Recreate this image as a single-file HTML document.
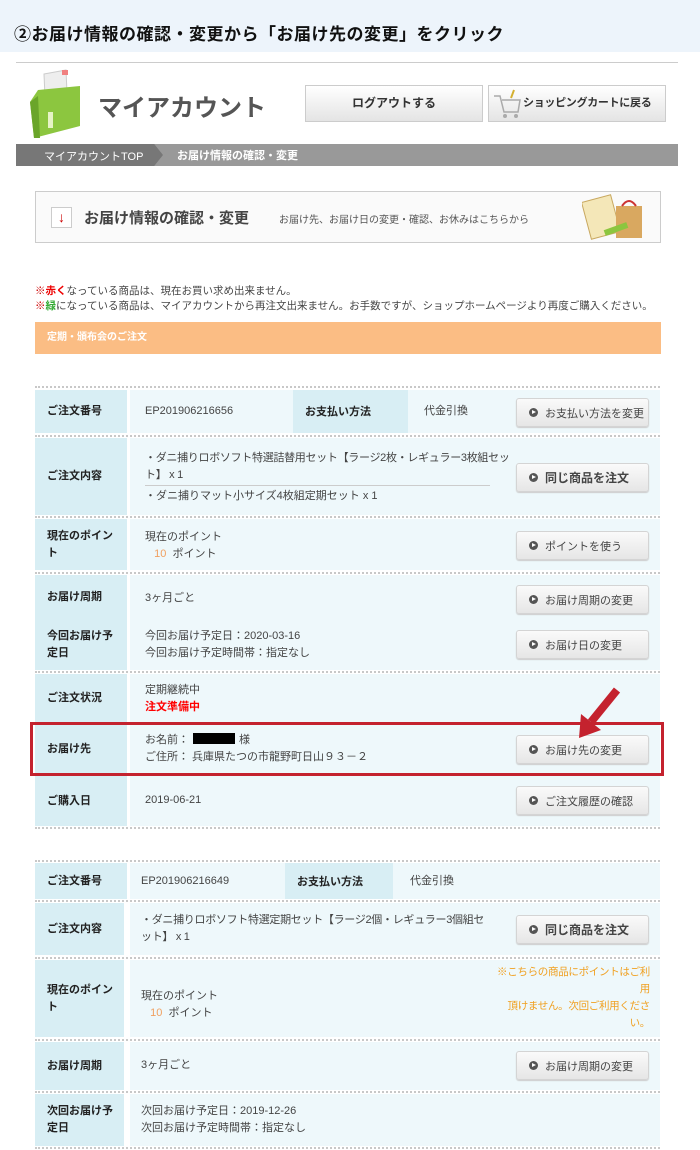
<!DOCTYPE html>
<html><head><meta charset="utf-8"><style>
*{margin:0;padding:0;box-sizing:border-box}
body{width:700px;height:1150px;background:#fff;font-family:"Liberation Sans","Noto Sans CJK JP",sans-serif;color:#333;position:relative;overflow:hidden;font-size:11px}
.a{position:absolute}
.lab{position:absolute;left:35px;width:92px;background:#d8eef4;font-weight:bold;font-size:11px;padding-left:12px;display:flex;align-items:center;line-height:17px;color:#222}
.val{position:absolute;left:130px;width:530px;background:#eef8fb}
.dl{position:absolute;left:35px;width:625px;border-top:2px dotted #c8c8c8}
.btn{position:absolute;left:516px;width:133px;height:29px;border:1px solid #d4d4d4;border-radius:3px;background:linear-gradient(#fafafa,#e6e6e6);font-size:11px;color:#444;display:flex;align-items:center;padding-left:12px;box-shadow:0 1px 1px #ccc;white-space:nowrap}
.btn b{width:9px;height:9px;border-radius:50%;background:#555;margin-right:7px;display:inline-block;position:relative}
.btn b:after{content:"";position:absolute;left:3px;top:2px;border-left:4px solid #fff;border-top:2.5px solid transparent;border-bottom:2.5px solid transparent}
.t{position:absolute;font-size:11px;line-height:17px;color:#444;white-space:nowrap}
</style></head><body>
<div class="a" style="left:0;top:0;width:700px;height:52px;background:#edf4fb"></div>
<div class="a" style="left:14px;top:20px;font-size:17px;font-weight:bold;color:#111;letter-spacing:0.5px">②お届け情報の確認・変更から「お届け先の変更」をクリック</div>
<div class="a" style="left:16px;top:62px;width:662px;border-top:1px solid #ccc"></div>
<svg class="a" style="left:26px;top:68px" width="60" height="72" viewBox="0 0 60 72"><path d="M18 6 L40 2 L42 48 L20 52Z" fill="#eee" stroke="#ccc"/><rect x="36" y="2" width="6" height="5" fill="#f08080"/><path d="M4 34 L12 22 L54 18 L54 58 L8 70Z" fill="#8cc63f"/><path d="M4 34 L12 28 L14 70 L8 70Z" fill="#6aa52a"/><rect x="22" y="44" width="5" height="16" fill="#e6f3c6"/></svg>
<div class="a" style="left:98px;top:88px;font-size:24px;font-weight:bold;color:#555;white-space:nowrap">マイアカウント</div>
<div class="a" style="left:305px;top:85px;width:178px;height:37px;border:1px solid #ccc;background:linear-gradient(#fff,#e4e4e4);font-weight:bold;font-size:12px;color:#333;text-align:center;line-height:35px">ログアウトする</div>
<div class="a" style="left:488px;top:85px;width:178px;height:37px;border:1px solid #ccc;background:linear-gradient(#fff,#e4e4e4);font-weight:bold;font-size:11px;color:#333;line-height:35px;padding-left:34px;white-space:nowrap;letter-spacing:-0.3px">ショッピングカートに戻る</div>
<svg class="a" style="left:492px;top:88px" width="30" height="32"><path d="M2 8h6l4 16h14l2-12H10" fill="none" stroke="#aaa" stroke-width="1.5"/><circle cx="13" cy="28" r="2" fill="#aaa"/><circle cx="24" cy="28" r="2" fill="#aaa"/><path d="M22 2l-3 8" stroke="#d4b030" stroke-width="2"/></svg>
<div class="a" style="left:16px;top:144px;width:662px;height:22px;background:#999"></div>
<div class="a" style="left:16px;top:144px;width:147px;height:22px;background:#777;clip-path:polygon(0 0,94% 0,100% 50%,94% 100%,0 100%)"></div>
<div class="a" style="left:44px;top:148px;color:#fff;font-size:11px">マイアカウントTOP</div>
<div class="a" style="left:177px;top:147px;color:#fff;font-size:11px;font-weight:bold">お届け情報の確認・変更</div>
<div class="a" style="left:35px;top:191px;width:626px;height:52px;border:1px solid #ccc;background:#fafafa"></div>
<div class="a" style="left:51px;top:207px;width:21px;height:21px;border:1px solid #ccc;background:#fff;color:#c00;text-align:center;font-weight:bold;font-size:14px;line-height:19px">↓</div>
<div class="a" style="left:84px;top:207px;font-size:15px;font-weight:bold;color:#444">お届け情報の確認・変更</div>
<div class="a" style="left:279px;top:211px;font-size:10px;color:#555">お届け先、お届け日の変更・確認、お休みはこちらから</div>
<svg class="a" style="left:582px;top:192px" width="66" height="50"><rect x="4" y="6" width="30" height="38" fill="#f4e7b8" stroke="#c8a860" transform="rotate(-15 19 25)"/><rect x="34" y="14" width="26" height="32" fill="#d9a860"/><path d="M40 14q7-10 14 0" fill="none" stroke="#c33" stroke-width="2"/><rect x="22" y="34" width="24" height="6" fill="#8cc63f" transform="rotate(-20 34 37)"/></svg>
<div class="t" style="left:35px;top:283px;font-size:10.5px"><span style="color:#c00">※</span><b style="color:#e00">赤く</b>なっている商品は、現在お買い求め出来ません。</div>
<div class="t" style="left:35px;top:298px;font-size:10.5px"><span style="color:#c00">※</span><b style="color:#3a3">緑</b>になっている商品は、マイアカウントから再注文出来ません。お手数ですが、ショップホームページより再度ご購入ください。</div>
<div class="a" style="left:35px;top:322px;width:626px;height:32px;background:#fbbd84;color:#fff;font-weight:bold;font-size:10px;line-height:32px;padding-left:12px">定期・頒布会のご注文</div>

<div class="dl" style="top:386px"></div>
<div class="val" style="top:390px;height:43px"></div>
<div class="lab" style="top:390px;height:43px">ご注文番号</div>
<div class="t" style="left:145px;top:403px">EP201906216656</div>
<div class="a" style="left:293px;top:390px;width:115px;height:43px;background:#d8eef4;font-weight:bold;padding:13px 0 0 12px;color:#222">お支払い方法</div>
<div class="t" style="left:424px;top:403px">代金引換</div>
<div class="btn" style="top:398px"><b></b>お支払い方法を変更</div>
<div class="dl" style="top:435px"></div>
<div class="val" style="top:438px;height:77px"></div>
<div class="lab" style="top:438px;height:77px">ご注文内容</div>
<div class="t" style="left:145px;top:450px;letter-spacing:-0.3px">・ダニ捕りロボソフト特選詰替用セット【ラージ2枚・レギュラー3枚組セッ<br>ト】 x 1</div>
<div class="a" style="left:145px;top:485px;width:345px;border-top:1px solid #ccc"></div>
<div class="t" style="left:145px;top:488px">・ダニ捕りマット小サイズ4枚組定期セット x 1</div>
<div class="btn" style="top:463px;font-weight:bold;font-size:12px"><b></b>同じ商品を注文</div>
<div class="dl" style="top:516px"></div>
<div class="val" style="top:519px;height:51px"></div>
<div class="lab" style="top:519px;height:51px">現在のポイン<br>ト</div>
<div class="t" style="left:145px;top:529px">現在のポイント<br>&nbsp;&nbsp;&nbsp;<span style="color:#f0a060">10</span>&nbsp;&nbsp;ポイント</div>
<div class="btn" style="top:531px"><b></b>ポイントを使う</div>
<div class="dl" style="top:572px"></div>
<div class="val" style="top:575px;height:95px"></div>
<div class="lab" style="top:575px;height:45px">お届け周期</div>
<div class="lab" style="top:620px;height:50px">今回お届け予<br>定日</div>
<div class="t" style="left:145px;top:590px">3ヶ月ごと</div>
<div class="btn" style="top:585px"><b></b>お届け周期の変更</div>
<div class="t" style="left:145px;top:628px">今回お届け予定日：2020-03-16<br>今回お届け予定時間帯：指定なし</div>
<div class="btn" style="top:630px"><b></b>お届け日の変更</div>
<div class="dl" style="top:671px"></div>
<div class="val" style="top:674px;height:152px"></div>
<div class="lab" style="top:674px;height:48px">ご注文状況</div>
<div class="t" style="left:145px;top:682px">定期継続中<br><b style="color:#f00">注文準備中</b></div>
<div class="lab" style="top:724px;height:50px">お届け先</div>
<div class="t" style="left:145px;top:732px">お名前：<span style="display:inline-block;width:42px;height:11px;background:#000;vertical-align:-1px;margin:0 4px"></span>様<br>ご住所： 兵庫県たつの市龍野町日山９３－２</div>
<div class="btn" style="top:735px"><b></b>お届け先の変更</div>
<div class="lab" style="top:776px;height:50px">ご購入日</div>
<div class="t" style="left:145px;top:792px">2019-06-21</div>
<div class="btn" style="top:786px"><b></b>ご注文履歴の確認</div>
<div class="dl" style="top:827px"></div>
<div class="a" style="left:30px;top:722px;width:634px;height:54px;border:3px solid #c4222e"></div>
<svg class="a" style="left:575px;top:686px" width="50" height="56"><path d="M42 4 L16 36" stroke="#c4222e" stroke-width="8"/><path d="M4 52 L6 28 L26 44Z" fill="#c4222e"/></svg>

<div class="dl" style="top:860px"></div>
<div class="val" style="top:863px;height:36px"></div>
<div class="lab" style="top:863px;height:36px">ご注文番号</div>
<div class="t" style="left:141px;top:873px">EP201906216649</div>
<div class="a" style="left:285px;top:863px;width:108px;height:36px;background:#d8eef4;font-weight:bold;padding:10px 0 0 12px;color:#222">お支払い方法</div>
<div class="t" style="left:410px;top:873px">代金引換</div>
<div class="dl" style="top:900px"></div>
<div class="val" style="top:903px;height:52px"></div>
<div class="lab" style="top:903px;height:52px;width:89px">ご注文内容</div>
<div class="t" style="left:141px;top:912px;letter-spacing:-0.3px">・ダニ捕りロボソフト特選定期セット【ラージ2個・レギュラー3個組セ<br>ット】 x 1</div>
<div class="btn" style="top:915px;font-weight:bold;font-size:12px"><b></b>同じ商品を注文</div>
<div class="dl" style="top:957px"></div>
<div class="val" style="top:960px;height:77px"></div>
<div class="lab" style="top:960px;height:77px;width:89px">現在のポイン<br>ト</div>
<div class="t" style="left:141px;top:988px">現在のポイント<br>&nbsp;&nbsp;&nbsp;<span style="color:#f0a060">10</span>&nbsp;&nbsp;ポイント</div>
<div class="t" style="left:495px;top:964px;width:155px;text-align:right;color:#f0a020;line-height:17px;font-size:10.5px;letter-spacing:-0.3px">※こちらの商品にポイントはご利<br>用<br>頂けません。次回ご利用くださ<br>い。</div>
<div class="dl" style="top:1039px"></div>
<div class="val" style="top:1042px;height:48px"></div>
<div class="lab" style="top:1042px;height:48px;width:89px">お届け周期</div>
<div class="t" style="left:141px;top:1057px">3ヶ月ごと</div>
<div class="btn" style="top:1051px"><b></b>お届け周期の変更</div>
<div class="dl" style="top:1091px"></div>
<div class="val" style="top:1094px;height:52px"></div>
<div class="lab" style="top:1094px;height:52px;width:89px">次回お届け予<br>定日</div>
<div class="t" style="left:141px;top:1103px">次回お届け予定日：2019-12-26<br>次回お届け予定時間帯：指定なし</div>
<div class="dl" style="top:1147px"></div>
</body></html>
